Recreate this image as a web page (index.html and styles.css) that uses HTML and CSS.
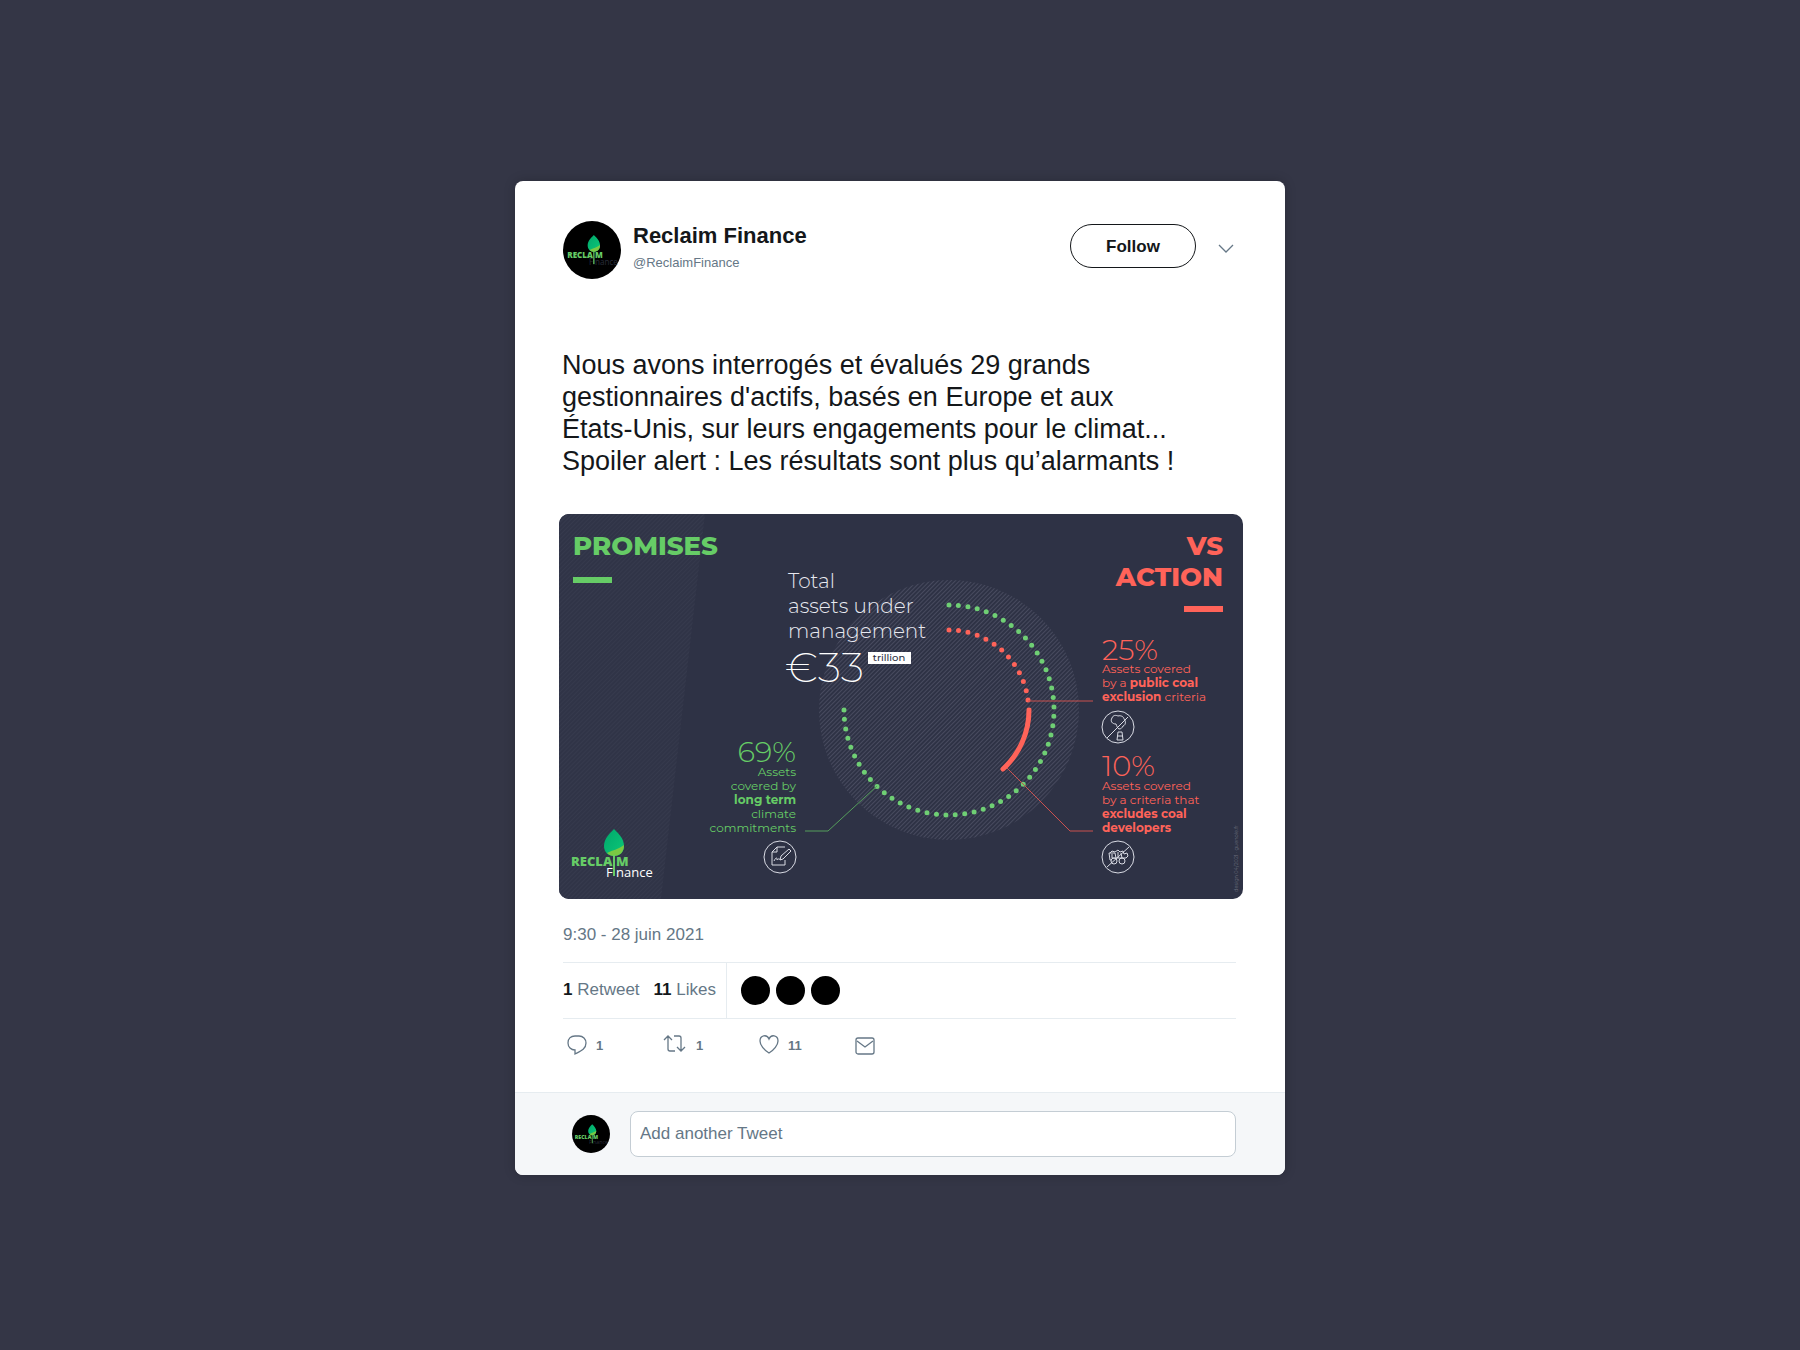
FILE: index.html
```html
<!DOCTYPE html>
<html lang="fr">
<head>
<meta charset="utf-8">
<meta name="viewport" content="width=device-width, initial-scale=1">
<title>Reclaim Finance</title>
<link rel="stylesheet" href="styles.css">
</head>
<body>
<svg class="defs" width="0" height="0" aria-hidden="true">
  <defs>
    <linearGradient id="leaf" x1="0" y1="0" x2="1" y2="1">
      <stop offset="0" stop-color="#00a86b"/>
      <stop offset="1" stop-color="#0cc778"/>
    </linearGradient>
    <pattern id="hatch" width="3" height="3" patternUnits="userSpaceOnUse" patternTransform="rotate(45)">
      <rect width="1" height="3" fill="#484b5f"/>
    </pattern>
    <pattern id="hatch-soft" width="3" height="3" patternUnits="userSpaceOnUse" patternTransform="rotate(45)">
      <rect width="1" height="3" fill="#363a4d"/>
    </pattern>
    <symbol id="logo" viewBox="0 0 80 50" overflow="visible">
      <path d="M43 0C38 5 33 10 33 17C33 23 37 27 43 27C49 27 53 23 53 17C53 10 48 5 43 0Z" fill="url(#leaf)"/>
      <path d="M36 24C42 21 48 20 53 16C53 23 49 27 43 27C40 27 38 26 36 24Z" fill="#7ac943"/>
      <text class="logo-name" x="0" y="37">RECLA</text>
      <text class="logo-name" x="45" y="37">M</text>
      <rect x="42" y="26" width="2" height="21" fill="#66cc66"/>
      <text class="logo-sub" x="35" y="48">F</text>
      <text class="logo-sub" x="45" y="48">nance</text>
    </symbol>
  </defs>
</svg>

<main class="card">
  <article class="tweet">
    <header class="head">
      <svg class="avatar" viewBox="0 0 58 58" role="img" aria-label="Reclaim Finance">
        <circle cx="29" cy="29" r="29"/>
        <use class="logo-dark" href="#logo" x="4" y="14" width="50" height="31"/>
      </svg>
      <div class="who">
        <h1 class="name">Reclaim Finance</h1>
        <a class="handle" href="#">@ReclaimFinance</a>
      </div>
      <button class="follow" type="button">Follow</button>
      <button class="more" type="button" aria-label="More">
        <svg width="16" height="10" viewBox="0 0 16 10"><path d="M1 1L8 8L15 1"/></svg>
      </button>
    </header>

    <p class="text">Nous avons interrogés et évalués 29 grands<br>gestionnaires d'actifs, basés en Europe et aux<br>États-Unis, sur leurs engagements pour le climat...<br>Spoiler alert : Les résultats sont plus qu’alarmants !</p>

    <svg class="chart" viewBox="0 0 684 385" role="img" aria-label="Promises vs action">
      <rect width="684" height="385" fill="#2e3245"/>
      <path d="M0 0H146L102 385H0Z" fill="#303447"/>
      <path d="M0 0H146L102 385H0Z" fill="url(#hatch-soft)"/>

      <text class="title green" x="14" y="41">PROMISES</text>
      <rect x="14" y="63" width="39" height="6" fill="#66cc66"/>
      <text class="title red end" x="664" y="41">VS</text>
      <text class="title red end" x="664" y="72">ACTION</text>
      <rect x="625" y="92" width="39" height="6" fill="#ff6359"/>

      <circle cx="390" cy="196" r="130" fill="url(#hatch)"/>
      <g fill="none" stroke-linecap="round" stroke-width="5">
        <path d="M390 91A105 105 0 1 1 285 196" pathLength="520" stroke-dasharray="0 10" stroke="#6fcf74"/>
        <path d="M390 116A80 80 0 0 1 469 186" pathLength="120" stroke-dasharray="0 10" stroke="#ff6359"/>
        <path d="M470 196A80 80 0 0 1 444 255" stroke="#ff6359"/>
      </g>
      <g fill="none">
        <path d="M469 187H534M448 254L511 317H534" stroke="#c9504f"/>
        <path d="M318 272L269 317H246" stroke="#559e5c"/>
      </g>

      <g class="lead">
        <text x="229" y="74">Total</text>
        <text x="229" y="99">assets under</text>
        <text x="229" y="124">management</text>
      </g>
      <text class="sum" x="226" y="168">€33</text>
      <rect x="309" y="138" width="43" height="12" fill="#fff"/>
      <text class="unit" x="330" y="147">trillion</text>

      <g class="green end">
        <text class="pct" x="237" y="248">69%</text>
        <text class="note" x="237" y="262">Assets</text>
        <text class="note" x="237" y="276">covered by</text>
        <text class="note bold" x="237" y="290">long term</text>
        <text class="note" x="237" y="304">climate</text>
        <text class="note" x="237" y="318">commitments</text>
      </g>
      <g class="red">
        <text class="pct" x="543" y="146">25%</text>
        <text class="note" x="543" y="159">Assets covered</text>
        <text class="note" x="543" y="173">by a <tspan class="bold">public coal</tspan></text>
        <text class="note" x="543" y="187"><tspan class="bold">exclusion</tspan> criteria</text>
        <text class="pct" x="543" y="262">10%</text>
        <text class="note" x="543" y="276">Assets covered</text>
        <text class="note" x="543" y="290">by a criteria that</text>
        <text class="note bold" x="543" y="304">excludes coal</text>
        <text class="note bold" x="543" y="318">developers</text>
      </g>

      <g class="icon" transform="translate(221 343)">
        <circle r="16"/>
        <path d="M2 -10H-3L-8 -5V8H5V3M-3 -10V-5H-8M5 -10H2M-6 4C-4 0 -3 0 -3 3C-1 1 0 2 0 3M0 3L1 -1L9 -8L11 -6L3 2Z"/>
      </g>
      <g class="icon" transform="translate(559 213)">
        <circle r="16"/>
        <path d="M-11 11L10 -10M0 5H4L5 13H-1ZM0 9H5M1 2C-1 1 -1 -1 -2 -3C-6 -3 -8 -6 -6 -9C-5 -12 -2 -12 0 -11C3 -12 6 -10 6 -8C8 -6 8 -2 5 -1C4 1 3 2 1 2Z"/>
      </g>
      <g class="icon" transform="translate(559 343)">
        <circle r="16"/>
        <path d="M-11 10L11 -10M-9 -4L-8 3H-7M-9 -4H-3L-2 1M-8 -4L-6 -6L-3 -5L0 -7L2 -5L5 -6L6 -3L9 -4L10 -1L8 1H-2M0 -5V1M3 -4L4 1M-6 -3V1H-2"/>
        <circle cx="-4" cy="4" r="3"/><circle cx="4" cy="4" r="3"/>
      </g>

      <use href="#logo" x="12" y="315" width="80" height="50"/>
      <text class="credit" transform="translate(679 378) rotate(-90)">design 04/2021 · guenole.fr</text>
    </svg>

    <time class="date" datetime="2021-06-28T09:30">9:30 - 28 juin 2021</time>

    <div class="stats">
      <div class="counts">
        <span><b>1</b> Retweet</span>
        <span><b>11</b> Likes</span>
      </div>
      <div class="faces"><i></i><i></i><i></i></div>
    </div>

    <div class="actions">
      <button type="button" aria-label="Reply">
        <svg width="20" height="22" viewBox="0 0 20 22"><path d="M8 16C4 16 1 13 1 9C1 4 4 2 8 2H12C16 2 19 5 19 9C19 15 14 17 8 20Z"/></svg>1
      </button>
      <button type="button" aria-label="Retweet">
        <svg width="24" height="22" viewBox="0 0 24 22"><path d="M1 6L5 2L9 6M5 2V15Q5 17 7 17H12M11 2H16Q18 2 18 4V17M14 13L18 17L22 13"/></svg>1
      </button>
      <button type="button" aria-label="Like">
        <svg width="20" height="22" viewBox="0 0 20 22"><path d="M10 19C5 16 1 11 1 7C1 1 8 0 10 5C12 0 19 1 19 7C19 11 15 16 10 19Z"/></svg>11
      </button>
      <button type="button" aria-label="Message">
        <svg width="20" height="22" viewBox="0 0 20 22"><rect x="1" y="4" width="18" height="16" rx="2"/><path d="M2 7L10 13L18 7"/></svg>
      </button>
    </div>
  </article>

  <form class="reply">
    <svg class="avatar small" viewBox="0 0 58 58" aria-hidden="true">
      <circle cx="29" cy="29" r="29"/>
      <use class="logo-dark" href="#logo" x="4" y="14" width="50" height="31"/>
    </svg>
    <input type="text" placeholder="Add another Tweet" aria-label="Add another Tweet">
  </form>
</main>
</body>
</html>
```
FILE: styles.css
```css
* { box-sizing: border-box; }

body {
  margin: 0;
  min-height: 100vh;
  display: flex;
  align-items: center;
  justify-content: center;
  padding: 24px;
  background: #343646;
  font-family: "Liberation Sans", Arial, sans-serif;
  color: #14171a;
}

.defs { position: absolute; }

button, input { font: inherit; color: inherit; }

button {
  padding: 0;
  border: 0;
  background: none;
  cursor: pointer;
}

.card {
  width: 100%;
  max-width: 770px;
  margin-top: 6px;
  background: #fff;
  border-radius: 8px;
  box-shadow: 0 0 12px rgba(0, 0, 0, .2);
  overflow: hidden;
}

.tweet { padding: 40px 49px 36px 48px; }

.head {
  display: flex;
  align-items: flex-start;
}

.avatar {
  flex: none;
  width: 58px;
  height: 58px;
}

.small { width: 38px; height: 38px; }

.logo-dark { --sub: #2a2d3a; }

.who {
  flex: 1;
  padding-left: 12px;
}

.name {
  margin: 0;
  font-size: 22px;
  line-height: 30px;
}

.handle {
  display: block;
  font-size: 13px;
  line-height: 24px;
  color: #657786;
  text-decoration: none;
}

.follow {
  width: 126px;
  height: 44px;
  margin-top: 3px;
  padding-top: 2px;
  border: 1px solid #14171a;
  border-radius: 22px;
  font-size: 17px;
  font-weight: 700;
}

.more {
  margin: 23px 2px 0 22px;
  line-height: 0;
}

.more svg, .actions svg {
  fill: none;
  stroke: #657786;
  stroke-width: 1.3;
}

.text {
  margin: 70px 0 37px -1px;
  font-size: 27px;
  line-height: 32px;
}

.chart {
  display: block;
  width: calc(100% + 11px);
  margin-left: -4px;
  border-radius: 10px;
  font-family: Montserrat, Inter, sans-serif;
}

.green { fill: #66cc66; }
.red { fill: #ff6359; }
.end { text-anchor: end; }
.title { font-size: 26px; font-weight: 800; }
.lead { font-size: 20px; font-weight: 300; fill: #e8e9f0; }
.sum { font-size: 42px; font-weight: 200; fill: #fff; }
.unit { font-size: 10px; font-weight: 500; fill: #2e3245; text-anchor: middle; }
.pct { font-size: 29px; font-weight: 300; }
.note { font-size: 12px; }
.bold { font-weight: 700; }
.credit { font-size: 5px; fill: #6b6e7c; }

.icon {
  fill: none;
  stroke: #d9dbe4;
}

.logo-name {
  font: 800 13px "Open Sans", sans-serif;
  fill: #66cc66;
}

.logo-sub {
  font: 500 13px "Open Sans", sans-serif;
  fill: var(--sub, #fff);
}

.date {
  display: block;
  margin-top: 24px;
  font-size: 17px;
  line-height: 24px;
  color: #657786;
}

.stats {
  display: flex;
  height: 57px;
  margin: 15px 0 0;
  border: solid #e6ecf0;
  border-width: 1px 0;
}

.counts {
  display: flex;
  gap: 14px;
  padding-right: 10px;
  border-right: 1px solid #e6ecf0;
  font-size: 17px;
  line-height: 54px;
  color: #657786;
}

.counts b { color: #14171a; }

.faces {
  display: flex;
  align-items: center;
  gap: 6px;
  padding-left: 14px;
}

.faces i {
  width: 29px;
  height: 29px;
  border-radius: 50%;
  background: #000;
}

.actions {
  display: flex;
  margin-top: 15px;
  padding-left: 4px;
}

.actions button {
  display: flex;
  align-items: center;
  gap: 9px;
  width: 96px;
  font-size: 13px;
  font-weight: 700;
  color: #657786;
}

.reply {
  display: flex;
  align-items: center;
  gap: 20px;
  padding: 18px 49px 18px 57px;
  border-top: 1px solid #e6ecf0;
  background: #f5f7f9;
}

.reply input {
  flex: 1;
  min-width: 0;
  height: 46px;
  padding: 0 9px;
  border: 1px solid #c4cdd4;
  border-radius: 8px;
  background: #fff;
  font-size: 17px;
}

.reply input::placeholder { color: #657786; opacity: 1; }
```
